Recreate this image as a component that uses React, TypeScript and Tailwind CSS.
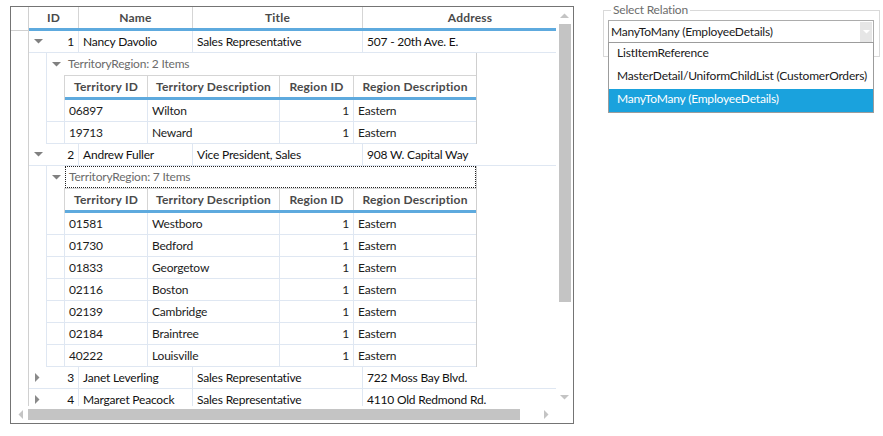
import React from 'react';

type Employee = { id: number; name: string; title: string; address: string };
type Territory = { id: string; desc: string };

const employees: Employee[] = [
  { id: 1, name: 'Nancy Davolio', title: 'Sales Representative', address: '507 - 20th Ave. E.' },
  { id: 2, name: 'Andrew Fuller', title: 'Vice President, Sales', address: '908 W. Capital Way' },
  { id: 3, name: 'Janet Leverling', title: 'Sales Representative', address: '722 Moss Bay Blvd.' },
  { id: 4, name: 'Margaret Peacock', title: 'Sales Representative', address: '4110 Old Redmond Rd.' },
];

const territories: Record<number, Territory[]> = {
  1: [
    { id: '06897', desc: 'Wilton' },
    { id: '19713', desc: 'Neward' },
  ],
  2: [
    { id: '01581', desc: 'Westboro' },
    { id: '01730', desc: 'Bedford' },
    { id: '01833', desc: 'Georgetow' },
    { id: '02116', desc: 'Boston' },
    { id: '02139', desc: 'Cambridge' },
    { id: '02184', desc: 'Braintree' },
    { id: '40222', desc: 'Louisville' },
  ],
};

function ArrowDown({ className = '' }: { className?: string }) {
  return (
    <svg width="9" height="5" viewBox="0 0 9 5" className={className}>
      <polygon points="0,0 9,0 4.5,4.5" fill="#808080" />
    </svg>
  );
}

function ArrowRight() {
  return (
    <svg width="5" height="9" viewBox="0 0 5 9">
      <polygon points="0,0 4.5,4.5 0,9" fill="#8a8a8a" />
    </svg>
  );
}

function MainHeader() {
  const cell =
    'flex shrink-0 items-center justify-center border-r border-[#d5d5d5] font-bold tracking-[0.2px] text-[#4a4a4a]';
  return (
    <div className="flex h-[24px]">
      <div className="w-[18px] shrink-0 border-r border-b border-[#d0d0d0]" />
      <div className="flex shrink-0 flex-col">
        <div className="flex h-[21px]">
          <div className={`${cell} w-[50px]`}>ID</div>
          <div className={`${cell} w-[114px]`}>Name</div>
          <div className={`${cell} w-[170px]`}>Title</div>
          <div className={`${cell} w-[214px] border-r-0`}>Address</div>
        </div>
        <div className="h-[3px] bg-[#5eaade]" />
      </div>
    </div>
  );
}

function MainRow({ emp, expanded }: { emp: Employee; expanded: boolean }) {
  const cell =
    'flex shrink-0 items-center border-r border-[#dfe7f2] px-[4px] whitespace-nowrap overflow-hidden';
  return (
    <div className="flex h-[22px]">
      <div className="w-[18px] shrink-0 border-r border-[#d0d0d0]" />
      <div className="flex shrink-0 border-b border-[#dfe7f2]">
        <div className={`${cell} w-[50px] justify-between pl-[5px]`}>
          {expanded ? <ArrowDown /> : <span className="pl-[1px]"><ArrowRight /></span>}
          <span>{emp.id}</span>
        </div>
        <div className={`${cell} w-[114px]`}>{emp.name}</div>
        <div className={`${cell} w-[170px]`}>{emp.title}</div>
        <div className={`${cell} w-[214px] border-r-0`}>{emp.address}</div>
      </div>
    </div>
  );
}

function Detail({ items, focused }: { items: Territory[]; focused: boolean }) {
  const head =
    'flex items-center justify-center border-r border-t border-[#d5d5d5] font-bold tracking-[0.2px] text-[#4a4a4a]';
  const cell = 'flex items-center border-r border-b border-[#dfe7f2] px-[4px] text-[#1c1c1c]';
  return (
    <div className="flex">
      <div className="w-[18px] shrink-0 border-r border-[#d0d0d0]" />
      <div className="w-[17px] shrink-0" />
      <div className="flex w-[431px] shrink-0 flex-col border-x border-[#dfe7f2] border-r-[#cfcfcf]">
        <div className="flex h-[22px]">
          <div className="flex w-[18px] items-center justify-center pl-[1px]">
            <ArrowDown className="mt-[1px]" />
          </div>
          <div
            className={`flex flex-1 items-center pl-[3px] text-[#6b6b6b] ${
              focused ? 'border border-dotted border-[#222]' : ''
            }`}
          >
            TerritoryRegion: {items.length} Items
          </div>
        </div>
        <div className="flex h-[25px]">
          <div className="w-[18px] border-r border-[#d5d5d5]" />
          <div className="flex flex-1 flex-col">
            <div className="flex h-[22px]">
              <div className={`${head} w-[83px]`}>Territory ID</div>
              <div className={`${head} w-[132px]`}>Territory Description</div>
              <div className={`${head} w-[74px]`}>Region ID</div>
              <div className={`${head} flex-1 border-r-0`}>Region Description</div>
            </div>
            <div className="h-[3px] bg-[#5eaade]" />
          </div>
        </div>
        {items.map((t) => (
          <div key={t.id} className="flex h-[22px]">
            <div className="w-[18px] border-r border-b border-[#dfe7f2]" />
            <div className={`${cell} w-[83px]`}>{t.id}</div>
            <div className={`${cell} w-[132px]`}>{t.desc}</div>
            <div className={`${cell} w-[74px] justify-end`}>1</div>
            <div className={`${cell} flex-1 border-r-0`}>Eastern</div>
          </div>
        ))}
      </div>
    </div>
  );
}

function VScroll() {
  return (
    <div className="flex h-[399px] w-[17px] flex-col items-center">
      <div className="flex h-[17px] items-center justify-center">
        <svg width="9" height="5" viewBox="0 0 9 5">
          <polygon points="0,5 9,5 4.5,0.5" fill="#c4c4c4" />
        </svg>
      </div>
      <div className="h-[278px] w-[12px] bg-[#c4c4c4]" />
      <div className="flex-1" />
      <div className="flex h-[17px] items-center justify-center">
        <svg width="9" height="5" viewBox="0 0 9 5">
          <polygon points="0,0 9,0 4.5,4.5" fill="#c4c4c4" />
        </svg>
      </div>
    </div>
  );
}

function HScroll() {
  return (
    <div className="flex h-[17px] items-center">
      <div className="flex w-[17px] items-center justify-center pl-[1px]">
        <svg width="5" height="9" viewBox="0 0 5 9">
          <polygon points="5,0 0.5,4.5 5,9" fill="#c4c4c4" />
        </svg>
      </div>
      <div className="h-[11px] w-[492px] bg-[#c4c4c4]" />
      <div className="flex-1" />
      <div className="flex w-[17px] items-center justify-center pr-[2px]">
        <svg width="5" height="9" viewBox="0 0 5 9">
          <polygon points="0,0 4.5,4.5 0,9" fill="#c4c4c4" />
        </svg>
      </div>
      <div className="w-[17px]" />
    </div>
  );
}

function Grid() {
  return (
    <div className="flex h-[418px] w-[564px] flex-col border border-[#747474] bg-white">
      <div className="flex h-[399px]">
        <div className="w-[545px] overflow-hidden">
          <MainHeader />
          {employees.map((emp) => {
            const items = territories[emp.id];
            return (
              <React.Fragment key={emp.id}>
                <MainRow emp={emp} expanded={!!items} />
                {items && <Detail items={items} focused={emp.id === 2} />}
              </React.Fragment>
            );
          })}
        </div>
        <VScroll />
      </div>
      <HScroll />
    </div>
  );
}

const relations = [
  'ListItemReference',
  'MasterDetail/UniformChildList (CustomerOrders)',
  'ManyToMany (EmployeeDetails)',
];

function RelationPicker() {
  return (
    <div className="relative mt-[4px] h-[47px] w-[277px] border border-[#d9d9d9]">
      <span className="absolute -top-[8px] left-[7px] bg-white px-[2px] leading-[14px] text-[#6d6d6d]">
        Select Relation
      </span>
      <div className="relative ml-[4px] mt-[9px] w-[266px]">
        <div className="flex h-[24px] items-center border border-[#acacac] bg-white">
          <span className="flex-1 whitespace-nowrap pl-[2px] text-[#1a1a1a]">ManyToMany (EmployeeDetails)</span>
          <div className="mr-[1px] flex h-[20px] w-[12px] items-center justify-center bg-[#e6e6e6]">
            <svg width="7" height="4" viewBox="0 0 7 4">
              <polygon points="0,0 7,0 3.5,3.5" fill="#ffffff" />
            </svg>
          </div>
        </div>
        <div className="absolute left-0 top-[22px] w-[266px] border border-[#9c9c9c] bg-white">
          {relations.map((r, i) => (
            <div
              key={r}
              className={`flex h-[23px] items-center whitespace-nowrap pb-[3px] pl-[8px] ${
                i === 2 ? 'bg-[#1aa2dd] text-white' : 'text-[#1a1a1a]'
              }`}
            >
              {r}
            </div>
          ))}
        </div>
      </div>
    </div>
  );
}

export default function App() {
  return (
    <div
      className="flex h-[436px] w-[883px] bg-white pl-[10px] pt-[6px] text-[12px] leading-none tracking-[-0.2px] text-[#111]"
      style={{ fontFamily: 'Lato, "Open Sans", sans-serif' }}
    >
      <Grid />
      <div className="ml-[29px]">
        <RelationPicker />
      </div>
    </div>
  );
}
